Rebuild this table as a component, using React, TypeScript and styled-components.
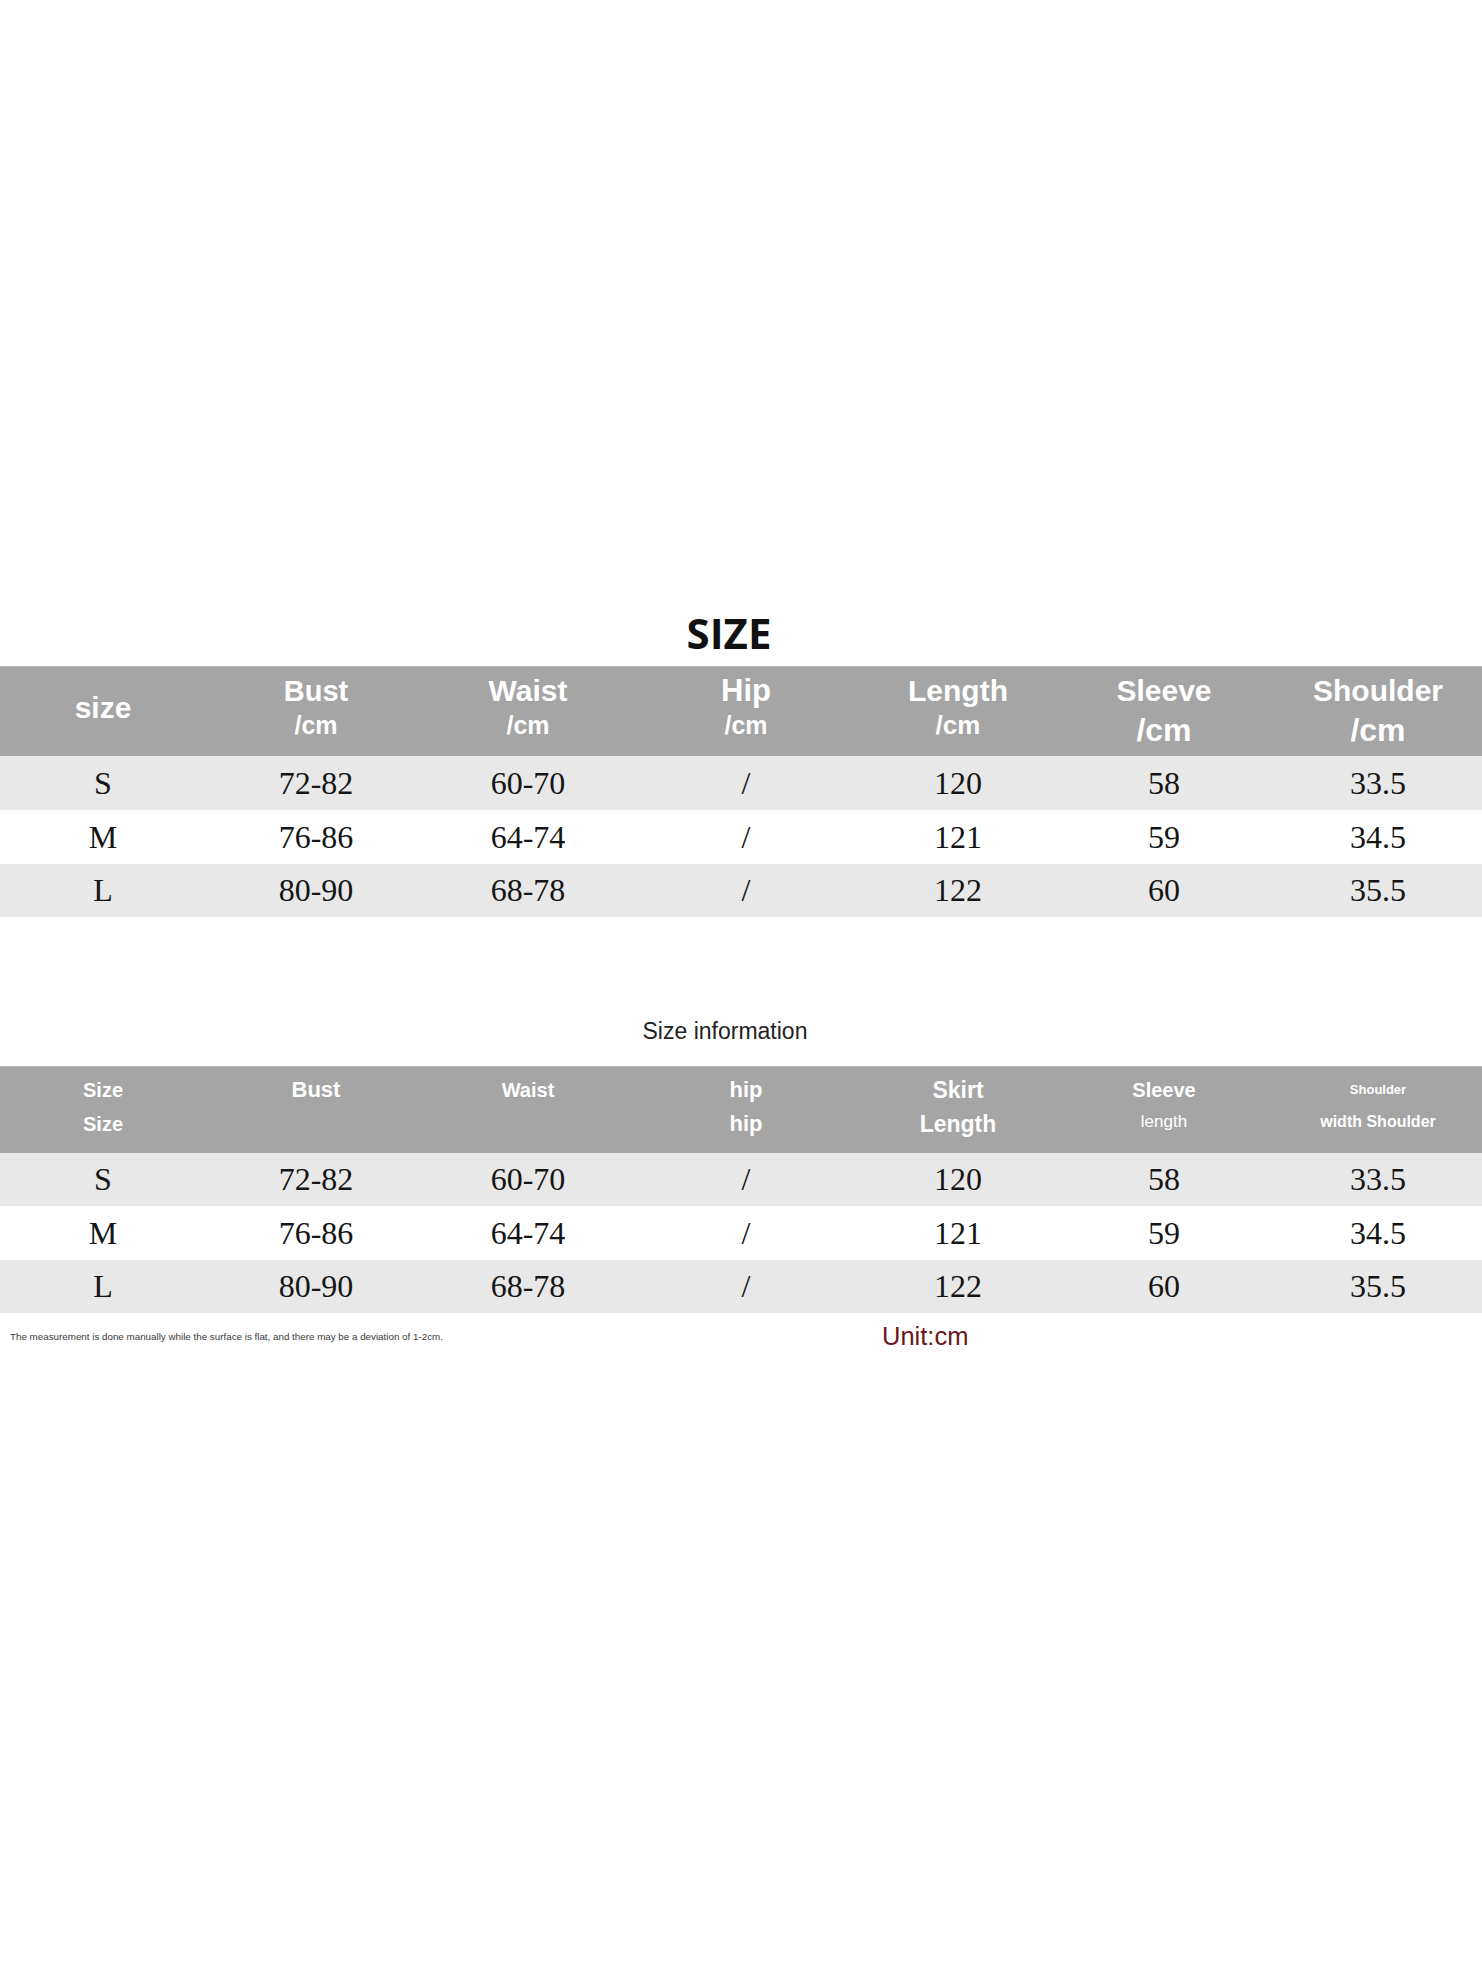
import React from 'react';
import styled, { createGlobalStyle } from 'styled-components';

const GlobalStyle = createGlobalStyle`
  html, body {
    margin: 0;
    padding: 0;
    background: #ffffff;
  }
  * {
    box-sizing: border-box;
  }
`;

type HeadLine = { text: string; size: number; lh?: number; weight?: number; shift?: number };
type Column = HeadLine[];

// column widths taken from the chart, they are not quite even
const COLS = '206fr 220fr 204fr 232fr 192fr 220fr 208fr';

const firstHead: Column[] = [
  [{ text: 'size', size: 30 }],
  [{ text: 'Bust', size: 29 }, { text: '/cm', size: 25 }],
  [{ text: 'Waist', size: 30 }, { text: '/cm', size: 25 }],
  [{ text: 'Hip', size: 31 }, { text: '/cm', size: 25 }],
  [{ text: 'Length', size: 30 }, { text: '/cm', size: 26 }],
  [{ text: 'Sleeve', size: 30 }, { text: '/cm', size: 32, shift: 5 }],
  [{ text: 'Shoulder', size: 30 }, { text: '/cm', size: 32, shift: 5 }],
];

const secondHead: Column[] = [
  [{ text: 'Size', size: 20 }, { text: 'Size', size: 20 }],
  [{ text: 'Bust', size: 22 }, { text: '', size: 20 }],
  [{ text: 'Waist', size: 20, lh: 30 }, { text: '', size: 20 }],
  [{ text: 'hip', size: 22 }, { text: 'hip', size: 22 }],
  [{ text: 'Skirt', size: 23 }, { text: 'Length', size: 23 }],
  [{ text: 'Sleeve', size: 20, lh: 30 }, { text: 'length', size: 17, weight: 400 }],
  [{ text: 'Shoulder', size: 13, lh: 30 }, { text: 'width Shoulder', size: 16 }],
];

const rows = [
  ['S', '72-82', '60-70', '/', '120', '58', '33.5'],
  ['M', '76-86', '64-74', '/', '121', '59', '34.5'],
  ['L', '80-90', '68-78', '/', '122', '60', '35.5'],
];

const Page = styled.div`
  width: 100%;
  min-height: 1966px;
  padding-top: 600px;
  background: #ffffff;
`;

const Title = styled.h1`
  margin: 0;
  height: 66px;
  line-height: 66px;
  padding-right: 24px;
  text-align: center;
  font-family: 'Open Sans', 'Liberation Sans', sans-serif;
  font-weight: 700;
  font-size: 42px;
  color: #111111;
`;

const Subtitle = styled.h2`
  margin: 92px 0 13px;
  height: 44px;
  line-height: 44px;
  padding-right: 32px;
  text-align: center;
  font-family: 'Liberation Sans', Arial, sans-serif;
  font-weight: 400;
  font-size: 23px;
  color: #222222;
`;

const Table = styled.div`
  width: 100%;
  display: flex;
  flex-direction: column;
`;

const HeadRow = styled.div<{ $height: number }>`
  display: grid;
  grid-template-columns: ${COLS};
  height: ${(p) => p.$height}px;
  padding-bottom: 7px;
  background: #a5a5a5;
  border-top: 1px solid #b4b4b4;
`;

const HeadCell = styled.div`
  display: flex;
  flex-direction: column;
  align-items: center;
  justify-content: center;
`;

const HeadText = styled.span<{ $size: number; $lh: number; $weight: number; $shift: number }>`
  display: block;
  font-family: 'Liberation Sans', Arial, sans-serif;
  font-weight: ${(p) => p.$weight};
  font-size: ${(p) => p.$size}px;
  line-height: ${(p) => p.$lh}px;
  height: ${(p) => p.$lh}px;
  margin-top: ${(p) => p.$shift}px;
  margin-bottom: ${(p) => -p.$shift}px;
  color: #ffffff;
  white-space: nowrap;
`;

const BodyRow = styled.div<{ $shade: boolean; $height: number }>`
  display: grid;
  grid-template-columns: ${COLS};
  height: ${(p) => p.$height}px;
  background: ${(p) => (p.$shade ? '#e8e8e8' : '#ffffff')};
`;

const Cell = styled.div`
  display: flex;
  align-items: center;
  justify-content: center;
  font-family: 'Liberation Serif', 'Times New Roman', serif;
  font-size: 32px;
  color: #151515;
`;

const Footer = styled.div`
  display: grid;
  grid-template-columns: 882px auto;
  align-items: center;
  height: 46px;
`;

const Note = styled.div`
  padding-left: 10px;
  font-family: 'Liberation Sans', Arial, sans-serif;
  font-size: 9.8px;
  color: #3a3a3a;
  white-space: nowrap;
`;

const Unit = styled.div`
  font-family: 'Liberation Sans', Arial, sans-serif;
  font-size: 25.5px;
  color: #6a1620;
`;

function SizeTable({ head, headHeight, rowHeights }: { head: Column[]; headHeight: number; rowHeights: number[] }) {
  return (
    <Table>
      <HeadRow $height={headHeight}>
        {head.map((col, i) => (
          <HeadCell key={i}>
            {col.map((line, j) => (
              <HeadText
                key={j}
                $size={line.size}
                $lh={line.lh ?? 34}
                $weight={line.weight ?? 700}
                $shift={line.shift ?? 0}
              >
                {line.text}
              </HeadText>
            ))}
          </HeadCell>
        ))}
      </HeadRow>
      {rows.map((row, i) => (
        <BodyRow key={row[0]} $shade={i % 2 === 0} $height={rowHeights[i]}>
          {row.map((v, j) => (
            <Cell key={j}>{v}</Cell>
          ))}
        </BodyRow>
      ))}
    </Table>
  );
}

export default function App() {
  return (
    <>
      <GlobalStyle />
      <Page>
        <Title>SIZE</Title>
        <SizeTable head={firstHead} headHeight={90} rowHeights={[54, 54, 53]} />
        <Subtitle>Size information</Subtitle>
        <SizeTable head={secondHead} headHeight={87} rowHeights={[53, 54, 53]} />
        <Footer>
          <Note>The measurement is done manually while the surface is flat, and there may be a deviation of 1-2cm.</Note>
          <Unit>Unit:cm</Unit>
        </Footer>
      </Page>
    </>
  );
}
